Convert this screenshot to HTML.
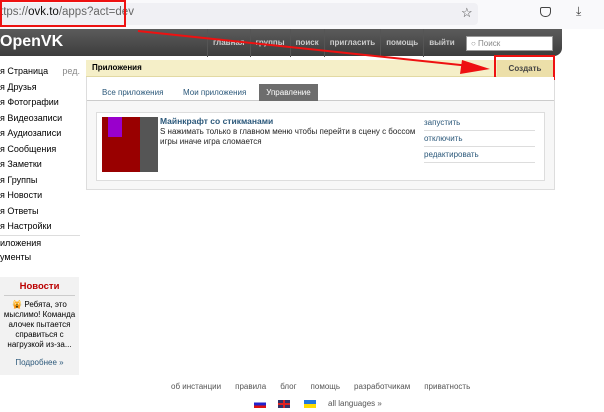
<!DOCTYPE html>
<html><head><meta charset="utf-8"><style>
*{margin:0;padding:0;box-sizing:border-box}
body{width:604px;height:412px;overflow:hidden;background:#fff;font-family:"Liberation Sans",sans-serif;font-size:8.5px;color:#000;position:relative}
.a{position:absolute}
.lnk{color:#2b587a}
.side div{height:15.5px;line-height:15.5px;font-size:9px}
.nav span{display:inline-block;padding:0 5px;border-left:1px solid #555;height:28px;line-height:28px;color:#ccc;font-size:8px;font-weight:bold}
.foot span{margin:0 7px;color:#555;font-size:8px}
</style></head><body>
<div class="a" style="left:0;top:0;width:604px;height:29px;background:#f9f9fb"></div>
<div class="a" style="left:0;top:3px;width:478px;height:22px;background:#f0f0f4;border-radius:4px"></div>
<div class="a" style="left:0;top:6px;font-size:11.5px;color:#666">ttps://<span style="color:#111">ovk.to</span>/apps?act=dev</div>
<div class="a" style="left:461px;top:5px;font-size:13px;color:#444">☆</div>
<div class="a" style="left:540px;top:7px;width:11px;height:10px;border:1.5px solid #444;border-radius:2px 2px 5px 5px"></div>
<div class="a" style="left:576px;top:4px;font-size:12px;color:#444">⤓</div>
<div class="a" style="left:0;top:0;width:126px;height:27px;border:2px solid #e11"></div>
<div class="a" style="left:0;top:29px;width:562px;height:27px;background:linear-gradient(#5b5b5b,#3d3d3d);border-radius:0 0 8px 0"></div>
<div class="a" style="left:0;top:33px;font-size:16px;font-weight:bold;color:#fff">OpenVK</div>
<div class="a nav" style="left:207px;top:29px;white-space:nowrap"><span>главная</span><span>группы</span><span>поиск</span><span>пригласить</span><span>помощь</span><span>выйти</span></div>
<div class="a" style="left:466px;top:36px;width:87px;height:15px;background:#fff;border:1px solid #999;font-size:8px;color:#888;padding:2px 4px">○ Поиск</div>
<div class="a side" style="left:0;top:64px;width:80px">
<div>я Страница <span style="color:#888;float:right">ред.</span></div><div>я Друзья</div><div>я Фотографии</div><div>я Видеозаписи</div><div>я Аудиозаписи</div><div>я Сообщения</div><div>я Заметки</div><div>я Группы</div><div>я Новости</div><div>я Ответы</div><div>я Настройки</div>
<div style="border-top:1px solid #ddd">иложения</div><div>ументы</div></div>
<div class="a" style="left:0;top:277px;width:79px;height:98px;background:#f2f2f2;text-align:center;font-size:8px;line-height:10px">
<div style="color:#b00;font-weight:bold;font-size:9.5px;padding:5px 0 3px;border-bottom:1px solid #ccc;margin:0 4px">Новости</div>
<div style="padding-top:4px">🙀 Ребята, это<br>мыслимо! Команда<br>алочек пытается<br>справиться с<br>нагрузкой из-за...</div>
<div class="lnk" style="margin-top:8px">Подробнее »</div></div>
<div class="a" style="left:86px;top:60px;width:469px;height:130px;background:#f7f7f7;border:1px solid #ddd"></div>
<div class="a" style="left:86px;top:60px;width:469px;height:17px;background:#f5efc8;border-bottom:1px solid #e2d9a3;font-weight:bold;font-size:8px;line-height:16px;padding-left:6px">Приложения</div>
<div class="a" style="left:497px;top:60px;width:56px;height:17px;background:#ecdfa9;text-align:center;line-height:17px;font-weight:bold;font-size:8px;color:#444">Создать</div>
<div class="a" style="left:494px;top:55px;width:61px;height:25px;border:2px solid #e11"></div>
<div class="a" style="left:87px;top:77px;width:467px;height:24px;background:#fff;border-bottom:1px solid #ccc"></div>
<div class="a lnk" style="left:102px;top:88px;font-size:8px">Все приложения</div>
<div class="a lnk" style="left:183px;top:88px;font-size:8px">Мои приложения</div>
<div class="a" style="left:259px;top:84px;width:59px;height:17px;background:#6d6d6d;color:#fff;font-size:8px;text-align:center;line-height:17px">Управление</div>
<div class="a" style="left:96px;top:112px;width:449px;height:69px;background:#fff;border:1px solid #ddd"></div>
<div class="a" style="left:102px;top:117px;width:56px;height:55px;background:#900"><div style="position:absolute;left:6px;top:0;width:14px;height:20px;background:#90c"></div><div style="position:absolute;left:38px;top:0;width:18px;height:55px;background:#555"></div></div>
<div class="a lnk" style="left:160px;top:116px;font-weight:bold;font-size:8.5px">Майнкрафт со стикманами</div>
<div class="a" style="left:160px;top:127px;font-size:8px;line-height:10px;color:#222">S нажимать только в главном меню чтобы перейти в сцену с боссом<br>игры иначе игра сломается</div>
<div class="a lnk" style="left:424px;top:115px;width:111px;font-size:8px;line-height:15px">
<div style="border-bottom:1px solid #ddd">запустить</div><div style="border-bottom:1px solid #ddd">отключить</div><div style="border-bottom:1px solid #ddd">редактировать</div></div>
<svg class="a" style="left:0;top:0" width="604" height="100"><line x1="138" y1="31" x2="470" y2="66" stroke="#e11" stroke-width="2"/><polygon points="490,69 462,60 460,74" fill="#e11"/></svg>
<div class="a foot" style="left:164px;top:381px;white-space:nowrap"><span>об инстанции</span><span>правила</span><span>блог</span><span>помощь</span><span>разработчикам</span><span>приватность</span></div>
<div class="a" style="left:254px;top:400px;width:12px;height:8px;background:linear-gradient(#fff 33%,#22c 33%,#22c 66%,#d11 66%)"></div>
<div class="a" style="left:278px;top:400px;width:12px;height:8px;background:#336"><div style="position:absolute;left:5px;top:0;width:2px;height:8px;background:#d22"></div><div style="position:absolute;left:0;top:3px;width:12px;height:2px;background:#d22"></div></div>
<div class="a" style="left:304px;top:400px;width:12px;height:8px;background:linear-gradient(#27d 50%,#fd0 50%)"></div>
<div class="a" style="left:328px;top:399px;font-size:8px;color:#555">all languages »</div>
</body></html>
